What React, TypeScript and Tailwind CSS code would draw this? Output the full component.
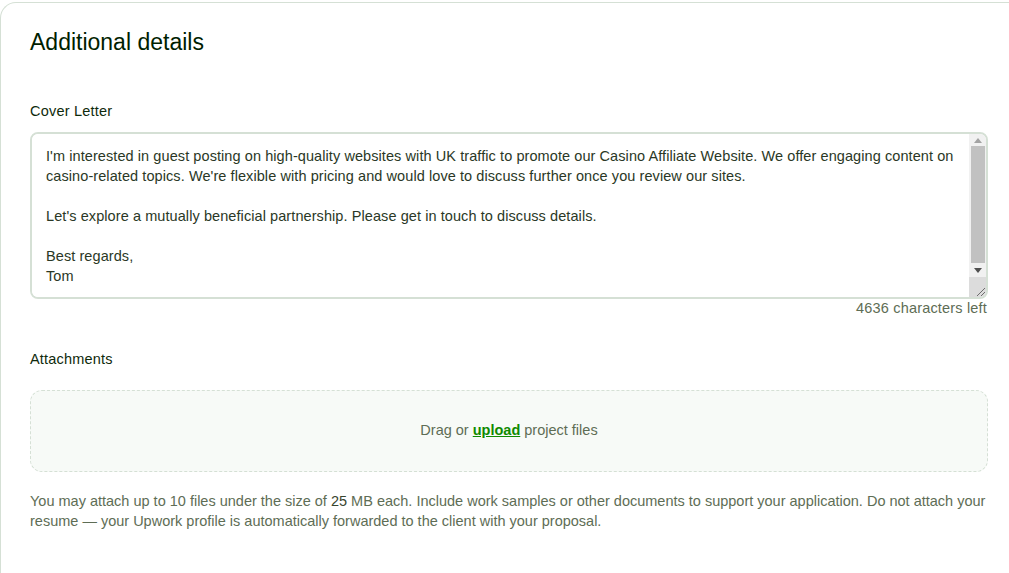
import React from "react";

const letter = `I'm interested in guest posting on high-quality websites with UK traffic to promote our Casino Affiliate Website. We offer engaging content on casino-related topics. We're flexible with pricing and would love to discuss further once you review our sites.

Let's explore a mutually beneficial partnership. Please get in touch to discuss details.

Best regards,
Tom`;

const font = { fontFamily: '"Liberation Sans", Arial, sans-serif' };

function FakeScrollbar() {
  return (
    <div className="w-[17px] bg-[#f1f1f1] flex flex-col shrink-0">
      <div className="h-[12px] flex items-center justify-center">
        <svg width="8" height="5" viewBox="0 0 8 5">
          <polygon points="4,0 8,5 0,5" fill="#a3a3a3" />
        </svg>
      </div>
      <div className="h-[117px] pl-[2px] pr-[1px]">
        <div className="h-full bg-[#c1c1c1]" />
      </div>
      <div className="h-[14px] flex items-center justify-center">
        <svg width="8" height="5" viewBox="0 0 8 5">
          <polygon points="0,0 8,0 4,5" fill="#505050" />
        </svg>
      </div>
      <div className="flex-1 bg-[#dcdcdc] flex items-end justify-end">
        <svg width="12" height="12" viewBox="0 0 12 12">
          <line x1="11" y1="3" x2="3" y2="11" stroke="#6d6d6d" strokeWidth="1" />
          <line x1="11" y1="7" x2="7" y2="11" stroke="#6d6d6d" strokeWidth="1" />
        </svg>
      </div>
    </div>
  );
}

export default function App() {
  return (
    <div className="w-[1009px] h-[573px] overflow-hidden bg-white pt-[2px]" style={font}>
      <div className="w-[1040px] h-[600px] border-t border-l border-[#d5e0d5] rounded-tl-[16px] pl-[29px] pt-[24px]">
        <h2 className="text-[23px] leading-[30px] text-[#001e00] font-normal">Additional details</h2>

        <div className="w-[958px]">
          <label className="block mt-[44px] text-[14.5px] leading-[20px] tracking-[0.2px] text-[#0f2a0c]">Cover Letter</label>
          <div className="mt-[11px] flex h-[167px] border-2 border-[#d5e0d5] rounded-[8px] overflow-hidden">
            <textarea
              className="flex-1 resize-none pl-[14px] pr-[6px] pt-[12px] pb-[8px] text-[14.5px] leading-[20px] tracking-[0.08px] text-[#2a3826] outline-none overflow-hidden bg-white"
              style={font}
              defaultValue={letter}
            />
            <FakeScrollbar />
          </div>
          <div className="text-right text-[14.5px] leading-[20px] tracking-[0.18px] text-[#5e6d55] mt-[-1px] pr-[1px]">4636 characters left</div>

          <div className="mt-[31px] text-[14.5px] leading-[20px] tracking-[0.2px] text-[#0f2a0c]">Attachments</div>
          <div className="mt-[21px] h-[82px] border border-dashed border-[#d5e0d5] rounded-[12px] bg-[#f7faf7] flex items-center justify-center text-[14.5px] text-[#5e6d55]">
            <span>
              Drag or <a className="text-[#108a00] font-bold underline">upload</a> project files
            </span>
          </div>
          <p className="mt-[19px] text-[14.5px] leading-[20px] text-[#5e6d55]">
            You may attach up to 10 files under the size of <span className="text-[#38452f]">25</span> MB each. Include work samples or other documents to support your application. Do not attach your resume — your Upwork profile is automatically forwarded to the client with your proposal.
          </p>
        </div>
      </div>
    </div>
  );
}
